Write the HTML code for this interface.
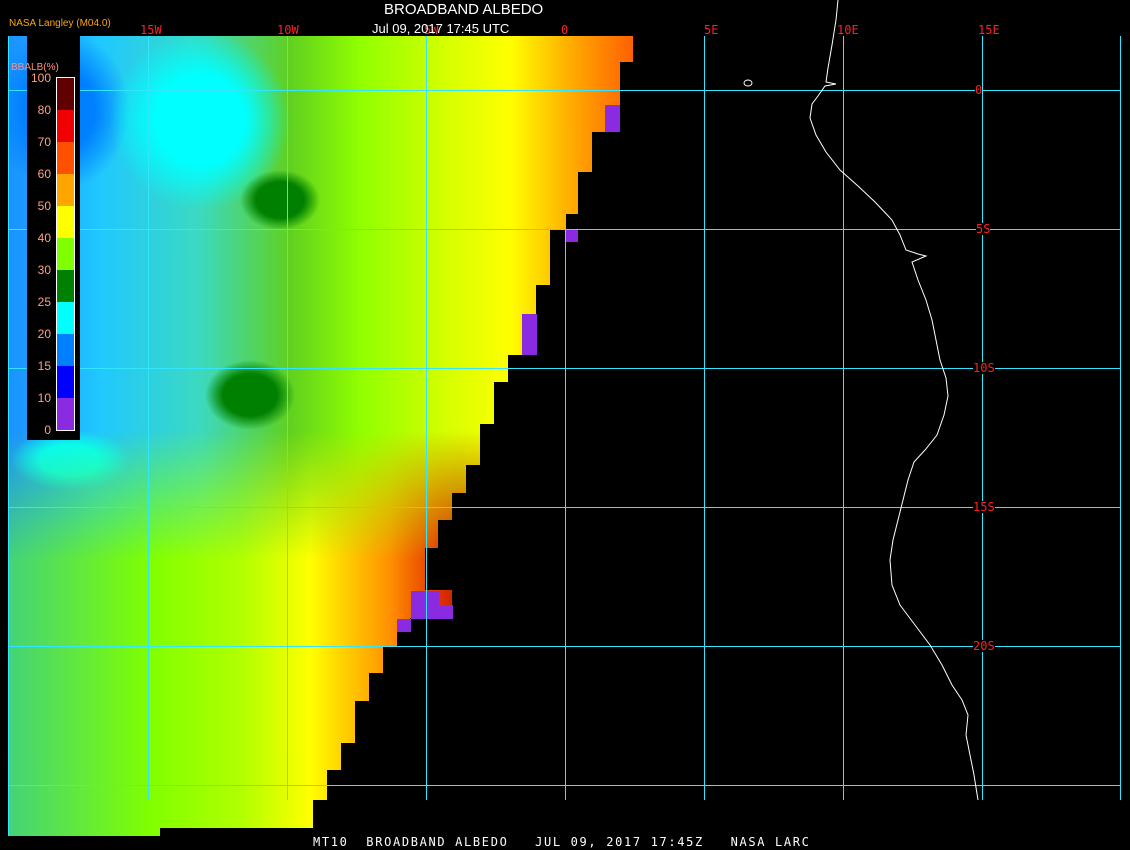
<!DOCTYPE html>
<html><head><meta charset="utf-8"><style>
html,body{margin:0;padding:0;background:#000;width:1130px;height:850px;overflow:hidden;position:relative;font-family:"Liberation Sans",sans-serif}
.data{position:absolute;left:0;top:0;width:1130px;height:850px;
clip-path:polygon(8px 36px,633px 36px,633px 62px,620px 62px,620px 105px,606px 105px,606px 132px,592px 132px,592px 172px,578px 172px,578px 214px,565px 214px,565px 230px,550px 230px,550px 285px,536px 285px,536px 355px,522px 355px,522px 355px,508px 355px,508px 382px,494px 382px,494px 424px,480px 424px,480px 465px,466px 465px,466px 493px,452px 493px,452px 520px,438px 520px,438px 548px,425px 548px,425px 590px,452px 590px,452px 618px,410px 618px,410px 632px,397px 632px,397px 646px,383px 646px,383px 673px,369px 673px,369px 701px,355px 701px,355px 743px,341px 743px,341px 770px,327px 770px,327px 800px,313px 800px,313px 828px,160px 828px,160px 836px,8px 836px);
background:
radial-gradient(ellipse 40px 30px at 280px 200px,#008000 60%,transparent 100%),
radial-gradient(ellipse 45px 35px at 250px 395px,#008000 60%,transparent 100%),
radial-gradient(ellipse 90px 90px at 200px 120px,#00ffff 50%,transparent 100%),
radial-gradient(ellipse 70px 80px at 60px 110px,#0080ff 50%,transparent 100%),
radial-gradient(ellipse 60px 30px at 70px 460px,#00ffff 50%,transparent 100%),
radial-gradient(ellipse 70px 25px at 80px 580px,#00ffff 50%,transparent 100%),
radial-gradient(ellipse 60px 30px at 380px 600px,#a00000 20%,transparent 100%),
linear-gradient(to right,#1a8cff 0px,#20c8ff 100px,#3cd9c0 200px,#60d020 290px,#90ff00 360px,#d8ff00 450px,#ffff00 510px,#ffa000 580px,#ff6000 633px);
}
.g{position:absolute;background:#33e6ff}
.lab{position:absolute;color:#ff2020;font-family:"DejaVu Sans Mono","Liberation Mono",monospace;font-size:12px;line-height:12px}
.leg{position:absolute;left:27px;top:35px;width:53px;height:405px;background:#000}
.bar{position:absolute;left:56px;top:77px;width:17px;height:352px;border:1px solid #fff}
.bar div{height:32px}
.ln{position:absolute;color:#ffa080;font-size:12px;width:24px;text-align:right;left:27px}
</style></head><body>
<div class="data"></div>
<div class="data" style="background:linear-gradient(to right,#40d080 0px,#80ff00 150px,#b0ff00 240px,#ffff00 310px,#ff9000 390px,#e03000 440px,#c02000 460px);-webkit-mask:linear-gradient(to bottom,transparent 430px,#000 560px);mask:linear-gradient(to bottom,transparent 430px,#000 560px)"></div>
<div style="position:absolute;left:605px;top:105px;width:15px;height:27px;background:#8a2be2"></div>
<div style="position:absolute;left:565px;top:230px;width:13px;height:12px;background:#8a2be2"></div>
<div style="position:absolute;left:522px;top:314px;width:15px;height:41px;background:#8a2be2"></div>
<div style="position:absolute;left:411px;top:591px;width:28px;height:28px;background:#8a2be2"></div>
<div style="position:absolute;left:439px;top:605px;width:14px;height:14px;background:#8a2be2"></div>
<div style="position:absolute;left:397px;top:619px;width:14px;height:13px;background:#8a2be2"></div>

<div class="g" style="left:148px;top:36px;width:1px;height:764px"></div>
<div class="g" style="left:287px;top:36px;width:1px;height:764px"></div>
<div class="g" style="left:426px;top:36px;width:1px;height:764px"></div>
<div class="g" style="left:565px;top:36px;width:1px;height:764px"></div>
<div class="g" style="left:704px;top:36px;width:1px;height:764px"></div>
<div class="g" style="left:843px;top:36px;width:1px;height:764px"></div>
<div class="g" style="left:982px;top:36px;width:1px;height:764px"></div>
<div class="g" style="left:1120px;top:36px;width:1px;height:764px"></div>
<div class="g" style="left:8px;top:36px;width:1px;height:800px"></div>
<div class="g" style="left:8px;top:90px;width:1112px;height:1px"></div>
<div class="g" style="left:8px;top:229px;width:1112px;height:1px"></div>
<div class="g" style="left:8px;top:368px;width:1112px;height:1px"></div>
<div class="g" style="left:8px;top:507px;width:1112px;height:1px"></div>
<div class="g" style="left:8px;top:646px;width:1112px;height:1px"></div>
<div class="g" style="left:8px;top:785px;width:1112px;height:1px"></div>

<div class="lab" style="left:140px;top:24px">15W</div>
<div class="lab" style="left:277px;top:24px">10W</div>
<div class="lab" style="left:424px;top:24px">5W</div>
<div class="lab" style="left:561px;top:24px">0</div>
<div class="lab" style="left:704px;top:24px">5E</div>
<div class="lab" style="left:837px;top:24px">10E</div>
<div class="lab" style="left:978px;top:24px">15E</div>
<div class="lab" style="left:975px;top:84px;background:#000">0</div>
<div class="lab" style="left:976px;top:223px;background:#000">5S</div>
<div class="lab" style="left:973px;top:362px;background:#000">10S</div>
<div class="lab" style="left:973px;top:501px;background:#000">15S</div>
<div class="lab" style="left:973px;top:640px;background:#000">20S</div>

<svg style="position:absolute;left:0;top:0" width="1130" height="850"><polyline fill="none" stroke="#fff" stroke-width="1" points="838,0 836,20 832,45 828,68 826,82 836,84 825,86 818,96 812,104 810,118 816,135 826,152 840,170 858,186 875,202 892,220 900,235 906,250 918,254 926,256 912,262 918,280 926,300 932,320 936,340 940,360 946,378 948,396 944,415 937,435 925,450 914,462 908,480 903,500 898,520 893,540 890,560 892,585 900,605 915,625 930,645 942,665 952,685 962,700 968,715 966,735 970,755 974,775 978,800"/><ellipse cx="748" cy="83" rx="4" ry="3" fill="none" stroke="#fff"/></svg>

<div class="leg"></div>
<div class="bar"><div style="background:#600000"></div><div style="background:#f00000"></div><div style="background:#ff5000"></div><div style="background:#ffa500"></div><div style="background:#ffff00"></div><div style="background:#80ff00"></div><div style="background:#008000"></div><div style="background:#00ffff"></div><div style="background:#0080ff"></div><div style="background:#0000ff"></div><div style="background:#8a2be2"></div></div>
<div style="position:absolute;left:11px;top:62px;color:#ff9080;font-size:10px">BBALB(%)</div>
<div class="ln" style="top:71px">100</div><div class="ln" style="top:103px">80</div><div class="ln" style="top:135px">70</div><div class="ln" style="top:167px">60</div><div class="ln" style="top:199px">50</div><div class="ln" style="top:231px">40</div><div class="ln" style="top:263px">30</div><div class="ln" style="top:295px">25</div><div class="ln" style="top:327px">20</div><div class="ln" style="top:359px">15</div><div class="ln" style="top:391px">10</div><div class="ln" style="top:423px">0</div>
<div style="position:absolute;left:9px;top:18px;color:#ffa500;font-size:10px">NASA Langley (M04.0)</div>
<div style="position:absolute;left:384px;top:1px;color:#fff;font-size:15px">BROADBAND ALBEDO</div>
<div style="position:absolute;left:372px;top:21px;color:#fff;font-size:13px">Jul 09, 2017 17:45 UTC</div>
<div style="position:absolute;left:313px;top:835px;color:#fff;font-family:'DejaVu Sans Mono','Liberation Mono',monospace;font-size:12px;white-space:pre;letter-spacing:1.66px">MT10  BROADBAND ALBEDO   JUL 09, 2017 17:45Z   NASA LARC</div>
</body></html>
